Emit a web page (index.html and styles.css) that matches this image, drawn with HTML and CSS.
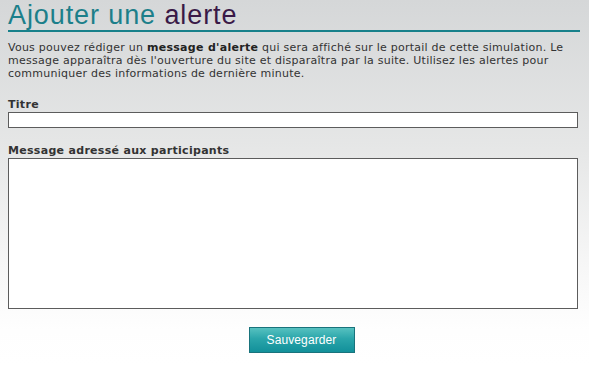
FILE: index.html
```html
<!DOCTYPE html>
<html lang="fr">
<head>
<meta charset="utf-8">
<title>Ajouter une alerte</title>
<link rel="stylesheet" href="styles.css">
</head>
<body>
<div class="page">
  <h1 class="title">Ajouter une <span class="accent">alerte</span></h1>
  <p class="intro">Vous pouvez rédiger un <strong>message d'alerte</strong> qui sera affiché sur le portail de cette simulation. Le message apparaîtra dès l'ouverture du site et disparaîtra par la suite. Utilisez les alertes pour communiquer des informations de dernière minute.</p>
  <form class="form">
    <label class="label" for="titre">Titre</label>
    <input class="field" id="titre" type="text">
    <label class="label label-msg" for="msg">Message adressé aux participants</label>
    <textarea class="field area" id="msg"></textarea>
    <div class="actions">
      <button class="btn" type="button">Sauvegarder</button>
    </div>
  </form>
</div>
</body>
</html>
```
FILE: styles.css
```css
html {
  background: linear-gradient(to bottom, #d5d7d8 0px, #e6e7e7 150px, #f6f6f6 260px, #fefefe 330px, #ffffff 365px);
  min-height: 100%;
}
body {
  margin: 0;
  padding: 0 8px;
  font-family: "DejaVu Sans", Verdana, sans-serif;
  font-size: 11px;
  color: #333;
}
.page {
  width: 573px;
}
.title {
  margin: 1px 0 0;
  font-family: "Liberation Sans", Arial, sans-serif;
  font-weight: normal;
  font-size: 27px;
  letter-spacing: 0.9px;
  line-height: 29px;
  color: #1c7f8a;
  border-bottom: 2px solid #17808a;
  width: 572px;
}
.accent {
  color: #3a1947;
}
.intro {
  margin: 9px 0 0;
  line-height: 13px;
  letter-spacing: 0.25px;
  color: #333;
}
.intro strong {
  color: #222;
  letter-spacing: 0.3px;
}
.form {
  display: flex;
  flex-direction: column;
  margin: 0;
}
.label {
  margin-top: 18px;
  line-height: 13px;
  font-weight: bold;
  letter-spacing: 0.3px;
  color: #333;
}
.label-msg {
  margin-top: 16px;
}
.field {
  margin: 1px 0 0;
  box-sizing: border-box;
  width: 570px;
  height: 16px;
  border: 1px solid #5c5c5c;
  background: #fff;
  padding: 0 2px;
  font-family: "DejaVu Sans", Verdana, sans-serif;
  font-size: 11px;
}
.area {
  height: 151px;
  resize: none;
}
.actions {
  display: flex;
  justify-content: center;
  padding-left: 14px;
  margin-top: 18px;
}
.btn {
  width: 106px;
  height: 26px;
  border: 1px solid #19737c;
  background: linear-gradient(to bottom, #56c1c0 0%, #2aa5aa 45%, #12909a 100%);
  color: #fff;
  font-family: "Liberation Sans", Arial, sans-serif;
  font-size: 12px;
  letter-spacing: 0.1px;
  padding: 0;
  box-shadow: 0 0 3px rgba(255,255,255,0.8);
}
```
